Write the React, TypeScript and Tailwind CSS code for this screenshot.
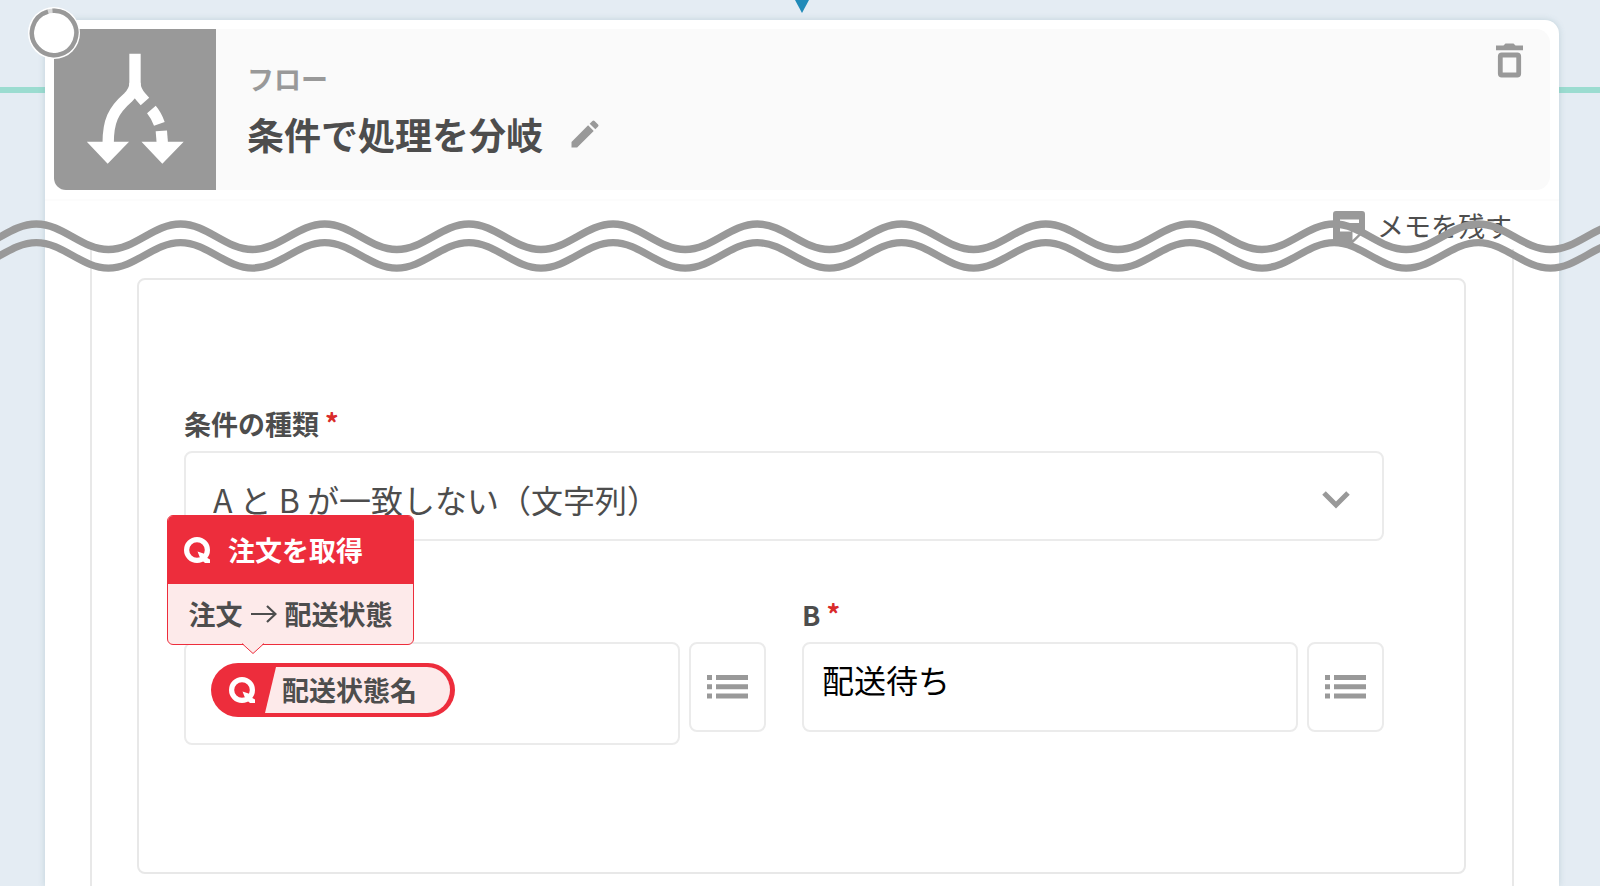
import React from 'react';
import { MdEdit } from 'react-icons/md';

const WAVE_LENGTH = 144.2;
const WAVE_START = 36.3 - WAVE_LENGTH;
const CONDITION_TYPES = [
  'A と B が一致しない（文字列）',
  'A と B が一致する（文字列）',
];

function wavePath(top: number) {
  let d = `M${WAVE_START} ${top}`;
  for (let i = 0; i < 30; i++) {
    d += 'c27 0 45.1 25.5 72.1 25.5s45.1 -25.5 72.1 -25.5';
  }
  return d;
}

function Waves() {
  return (
    <svg
      className="pointer-events-none absolute inset-x-0 top-[214px] h-[62px] w-full"
      fill="none"
      stroke="#999999"
      strokeWidth="7.4"
      aria-hidden="true"
    >
      <path d={wavePath(10)} />
      <path d={wavePath(28.6)} />
    </svg>
  );
}

function BranchIcon() {
  return (
    <svg viewBox="0 0 162 162" className="h-full w-full" fill="none" aria-hidden="true">
      <g stroke="#ffffff" strokeWidth="11.4">
        <path d="M81 25V54Q81 62 74 69C59 82 54 93 54 115" />
        <path d="M81 54Q81 62 87.500 69L91 73" />
        <path d="M97.500 81Q102.500 87 105.500 95.500" />
        <path d="M107.500 102.500L108.500 115" />
      </g>
      <path d="M32.500 113.500H75L53.500 135.500ZM87.500 113.500H130L108.500 135.500Z" fill="#ffffff" />
    </svg>
  );
}

function StatusRing() {
  return (
    <svg
      viewBox="0 0 52 52"
      className="absolute -left-[17px] -top-[13px] h-[52px] w-[52px]"
      aria-hidden="true"
    >
      <circle cx="26" cy="26" r="26" fill="#ffffff" />
      <circle cx="26" cy="26" r="22.2" fill="none" stroke="#d9d9d9" strokeWidth="4.400" />
      <path d="M24.500 3.800A22.200 22.200 0 1 1 20 4.600" fill="none" stroke="#999999" strokeWidth="4.400" />
    </svg>
  );
}

function QIcon() {
  return (
    <svg viewBox="0 0 28 28" className="h-7 w-7 shrink-0" fill="none" aria-hidden="true">
      <circle cx="13" cy="14" r="10.400" stroke="#ffffff" strokeWidth="5.200" />
      <path d="M13.500 15.500L19.500 17.500L22.500 21.500L26 23.500V27H21L16.500 23Z" fill="#ffffff" />
    </svg>
  );
}

function TrashIcon() {
  return (
    <svg viewBox="0 0 28 35" className="h-[35px] w-7" aria-hidden="true">
      <path d="M0 2.500H7.500L9.500 0.500H17.500L19.500 2.500H27V7.200H0Z" fill="#999999" />
      <rect x="4.300" y="12" width="18.400" height="20" rx="1.500" fill="none" stroke="#999999" strokeWidth="4.800" />
    </svg>
  );
}

function MemoIcon() {
  return (
    <svg viewBox="0 0 32 32" className="h-8 w-8" aria-hidden="true">
      <path
        fillRule="evenodd"
        fill="#999999"
        d="M3 0H29Q32 0 32 3V20L20 32H3Q0 32 0 29V3Q0 0 3 0ZM7 8.500V12H26V8.500ZM7 17V20.500H18V17ZM19.500 20V29L29 20Z"
      />
    </svg>
  );
}

function ListIcon() {
  return (
    <svg viewBox="0 0 42 24" className="h-6 w-[42px]" fill="#999999" aria-hidden="true">
      <path d="M0 0H5V5H0ZM0 9.200H5V14.200H0ZM0 18.400H5V23.400H0ZM9 0H41V5H9ZM9 9.200H41V14.200H9ZM9 18.400H41V23.400H9Z" />
    </svg>
  );
}

function FieldLabel({ htmlFor, children }: { htmlFor: string; children: React.ReactNode }) {
  return (
    <label htmlFor={htmlFor} className="flex h-[46px] gap-[6px] text-[27px] leading-[38px] font-bold">
      {children}
      <span className="leading-9 text-[#d92b2b]">*</span>
    </label>
  );
}

function PickButton({ label }: { label: string }) {
  return (
    <button
      type="button"
      aria-label={label}
      className="flex h-[90px] w-[77px] shrink-0 items-center justify-center rounded-lg border-2 border-[#ebebeb]"
    >
      <ListIcon />
    </button>
  );
}

function VariableTooltip() {
  return (
    <div className="absolute bottom-[100px] -left-[17px] w-[247px] rounded-md border border-[#ed2d3c] bg-[#fdeaea] font-bold">
      <div className="flex h-[68px] items-center gap-4 rounded-t-[5px] bg-[#ed2d3c] pl-4 text-[27px] text-white">
        <QIcon />
        注文を取得
      </div>
      <div className="flex h-[60px] items-center justify-center gap-2 text-[27px]">
        注文
        <svg viewBox="0 0 26 20" className="h-5 w-[26px]" fill="none" stroke="#4d4d4d" strokeWidth="2.200" aria-hidden="true">
          <path d="M0 10H24M16 2L24.500 10L16 18" />
        </svg>
        配送状態
      </div>
      <svg viewBox="0 0 22 12" className="absolute top-full left-[74px] -mt-px h-3 w-[22px]" aria-hidden="true">
        <path d="M0 0H22L11 10.500Z" fill="#fdeaea" />
        <path d="M0 0.500L11 10.500L22 0.500" fill="none" stroke="#ed2d3c" />
      </svg>
    </div>
  );
}

function VariablePill() {
  return (
    <span className="flex h-[54px] shrink-0 items-center rounded-full bg-[#ed2d3c] py-1 pr-[5px] pl-[18px]">
      <QIcon />
      <span className="ml-2 flex h-[46px] items-center rounded-r-full bg-[#fdeaea] pr-[33px] pl-[17px] text-[27px] font-bold [clip-path:polygon(11px_0,100%_0,100%_100%,0_100%)]">
        配送状態名
      </span>
    </span>
  );
}

export default function App() {
  return (
    <div className="relative flex min-h-screen flex-col overflow-hidden bg-[#e4ecf3] pr-[41px] pl-[45px] font-['Noto_Sans_CJK_JP',sans-serif] text-[#4d4d4d]">
      <div className="absolute inset-x-0 top-[87px] h-[6px] bg-[#9bdcd0]" />
      <div className="flex h-5 justify-center">
        <svg viewBox="0 0 14 13" className="h-[13px] w-[14px]" aria-hidden="true">
          <path d="M0 0H14L7 13Z" fill="#208ab8" />
        </svg>
      </div>

      <main className="relative flex flex-1 flex-col rounded-t-[14px] bg-white shadow-[0_0_6px_rgba(110,150,160,0.3)]">
        <header className="border-b-2 border-[#fcfcfc] px-[9px] pt-[9px] pb-[9px]">
          <div className="flex rounded-[14px] bg-[#fafafa]">
            <div className="h-[161px] w-[162px] shrink-0 rounded-bl-xl bg-[#999999]">
              <BranchIcon />
            </div>
            <div className="flex-1 pt-[30px] pl-[31px]">
              <p className="text-[27px] leading-10 font-bold text-[#999999]">フロー</p>
              <div className="mt-[11px] flex items-center gap-6">
                <h1 className="text-[37px] leading-[48px] font-bold">条件で処理を分岐</h1>
                <button type="button" aria-label="名前を編集" className="text-[#999999]">
                  <MdEdit className="h-9 w-9" />
                </button>
              </div>
            </div>
            <button type="button" aria-label="削除" className="mt-[14px] mr-[26px] self-start">
              <TrashIcon />
            </button>
          </div>
        </header>
        <StatusRing />

        <div className="mx-[45px] flex h-[48px] items-center justify-end pt-[3px]">
          <button type="button" className="flex items-center gap-3 pr-[2px] text-[27px]">
            <MemoIcon />
            メモを残す
          </button>
        </div>

        <section className="mx-[45px] flex-1 border-x-2 border-[#e8e8e8] pt-[29px] pr-[46px] pb-[11px] pl-[45px]">
          <div className="rounded-lg border-2 border-[#e8e8e8] pt-[125px] pr-[80px] pb-[127px] pl-[45px]">
            <FieldLabel htmlFor="condition-type">条件の種類</FieldLabel>
            <div className="relative">
              <select
                id="condition-type"
                className="h-[90px] w-full appearance-none rounded-lg border-2 border-[#ebebeb] bg-white pt-[6px] pl-[27px] text-[32px]"
              >
                {CONDITION_TYPES.map((type) => (
                  <option key={type}>{type}</option>
                ))}
              </select>
              <svg
                viewBox="0 0 28 18"
                className="pointer-events-none absolute top-[40px] right-[34px] h-[18px] w-7"
                fill="none"
                stroke="#999999"
                strokeWidth="5"
                aria-hidden="true"
              >
                <path d="M2 2L14 14L26 2" />
              </svg>
            </div>

            <div className="mt-[55px] grid grid-cols-2 gap-9">
              <div className="relative flex items-start gap-[9px] pt-[46px]">
                <div className="flex h-[103px] min-w-0 flex-1 items-center rounded-lg border-2 border-[#ebebeb] pb-[7px] pl-[25px]">
                  <VariablePill />
                  <input type="text" aria-label="A" className="min-w-0 flex-1 text-[32px] outline-none" />
                </div>
                <PickButton label="A の変数を選択" />
                <VariableTooltip />
              </div>
              <div>
                <FieldLabel htmlFor="value-b">B</FieldLabel>
                <div className="flex items-start gap-[9px]">
                  <input
                    id="value-b"
                    type="text"
                    defaultValue="配送待ち"
                    className="h-[90px] min-w-0 flex-1 rounded-lg border-2 border-[#ebebeb] pb-4 pl-[18px] text-[32px] text-black"
                  />
                  <PickButton label="B の変数を選択" />
                </div>
              </div>
            </div>
          </div>
        </section>
      </main>
      <Waves />
    </div>
  );
}
